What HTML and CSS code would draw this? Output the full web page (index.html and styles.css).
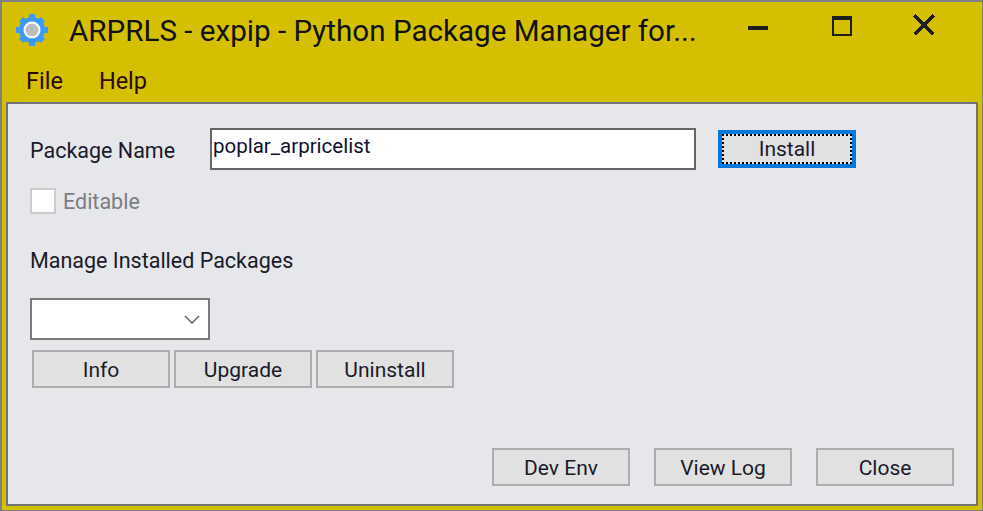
FILE: index.html
```html
<!DOCTYPE html>
<html lang="en">
<head>
<meta charset="utf-8">
<title>ARPRLS - expip</title>
<link rel="stylesheet" href="styles.css">
</head>
<body>
<div class="window">
  <header class="titlebar">
    <svg class="app-icon" viewBox="0 0 32 32" aria-hidden="true">
      <g fill="#3b99fc">
        <circle cx="16" cy="16" r="13"/>
        <rect x="13" y="0" width="6" height="32"/>
        <rect x="0" y="13" width="32" height="6"/>
        <rect x="13" y="0.500" width="6" height="31" transform="rotate(45 16 16)"/>
        <rect x="13" y="0.500" width="6" height="31" transform="rotate(-45 16 16)"/>
      </g>
      <circle cx="16" cy="16" r="8.500" fill="#fff"/>
      <circle cx="16" cy="16" r="6.500" fill="#bdbdbd"/>
    </svg>
    <span class="title">ARPRLS - expip - Python Package Manager for...</span>
    <div class="win-controls">
      <span class="win-btn"><span class="min-glyph"></span></span>
      <span class="win-btn"><span class="max-glyph"></span></span>
      <span class="win-btn">
        <svg class="close-glyph" viewBox="0 0 22 22" aria-hidden="true"><path d="M1.5 1.500l19 19M20.500 1.500l-19 19" stroke="#1e1e1e" stroke-width="3.600" fill="none" shape-rendering="crispEdges"/></svg>
      </span>
    </div>
  </header>
  <nav class="menubar">
    <span class="menu-item">File</span>
    <span class="menu-item">Help</span>
  </nav>
  <main class="panel">
    <div class="package-row">
      <label class="label package-label">Package Name</label>
      <div class="text-input">poplar_arpricelist</div>
      <button class="btn btn-focus"><span class="focus-ring">Install</span></button>
    </div>
    <div class="editable-row">
      <span class="checkbox"></span>
      <span class="label disabled">Editable</span>
    </div>
    <div class="label manage-label">Manage Installed Packages</div>
    <div class="select">
      <svg class="chevron" viewBox="0 0 16 9" aria-hidden="true"><path d="M1 1l7 7 7-7" stroke="#666" stroke-width="1.500" fill="none"/></svg>
    </div>
    <div class="manage-buttons">
      <button class="btn">Info</button>
      <button class="btn">Upgrade</button>
      <button class="btn">Uninstall</button>
    </div>
    <div class="footer-buttons">
      <button class="btn">Dev Env</button>
      <button class="btn">View Log</button>
      <button class="btn">Close</button>
    </div>
  </main>
</div>
</body>
</html>
```
FILE: styles.css
```css
* { box-sizing: border-box; }
html, body { margin: 0; height: 100%; }
body {
  width: 983px;
  height: 511px;
  overflow: hidden;
  font-family: Roboto, "Open Sans", sans-serif;
  color: #111;
}
.window {
  width: 983px;
  height: 511px;
  background: #d5c000;
  border: 2px solid #808080;
  border-bottom-width: 1px;
  border-right-width: 1px;
  display: flex;
  flex-direction: column;
  padding: 0 4px 4px 4px;
}
.titlebar {
  height: 56px;
  display: flex;
  align-items: center;
  padding-left: 10px;
  flex: none;
}
.app-icon { width: 32px; height: 32px; flex: none; }
.title {
  margin-left: 21px;
  padding-top: 1px;
  font-size: 29.600px;
  white-space: nowrap;
  color: #111;
}
.win-controls { margin-left: auto; margin-bottom: 10px; padding-right: 13px; display: flex; align-items: center; flex: none; }
.win-btn { width: 82px; height: 40px; display: flex; align-items: center; justify-content: center; }
.min-glyph { display: block; width: 20px; height: 4px; margin-top: 6px; margin-right: 4px; background: #1e1e1e; }
.max-glyph { display: block; width: 20px; height: 20px; margin-top: 2px; border: 2px solid #1e1e1e; border-top-width: 4px; }
.close-glyph { width: 22px; height: 22px; display: block; }
.menubar {
  height: 44px;
  display: flex;
  align-items: center;
  gap: 36px;
  padding-left: 20px;
  padding-top: 2px;
  font-size: 23.500px;
  flex: none;
  color: #2a0a00;
}
.panel {
  flex: 1;
  min-height: 0;
  background: #e6e7eb;
  border: 2px solid #737373;
  display: flex;
  flex-direction: column;
  padding: 24px 22px 18px 22px;
}
.label { font-size: 21.500px; line-height: 28px; color: #1a1a2a; white-space: nowrap; }
.disabled { color: #7c7c84; }
.package-row { display: flex; align-items: center; height: 42px; }
.package-label { width: 180px; padding-top: 4px; height: 32px; }
.text-input {
  width: 486px;
  height: 42px;
  background: #fff;
  border: 2px solid #666;
  font-size: 20.500px;
  line-height: 32px;
  padding-left: 1px;
  color: #101030;
}
.btn {
  width: 138px;
  height: 38px;
  padding: 2px 0 0;
  background: #e1e1e1;
  border: 2px solid #adadad;
  font-family: inherit;
  font-size: 21px;
  line-height: 30px;
  color: #1a1a2a;
  flex: none;
}
.btn-focus { margin-left: 22px; border: 4px solid #0078d7; padding: 0; }
.focus-ring { display: block; height: 30px; line-height: 26px; border: 2px dotted #000; }
.editable-row { display: flex; align-items: center; margin-top: 18px; height: 26px; }
.checkbox { width: 26px; height: 26px; background: #fff; border: 2px solid #ccc; flex: none; }
.editable-row .label { margin-left: 7px; padding-top: 1px; height: 29px; }
.manage-label { margin-top: 32px; padding-top: 1px; height: 28px; }
.select {
  margin-top: 24px;
  width: 180px;
  height: 42px;
  background: #fff;
  border: 2px solid #7a7a7a;
  display: flex;
  align-items: center;
  justify-content: flex-end;
  padding-right: 8px;
}
.chevron { width: 16px; height: 9px; }
.manage-buttons { display: flex; gap: 4px; margin-top: 10px; padding-left: 2px; }
.footer-buttons { display: flex; gap: 24px; justify-content: flex-end; margin-top: auto; }
```
